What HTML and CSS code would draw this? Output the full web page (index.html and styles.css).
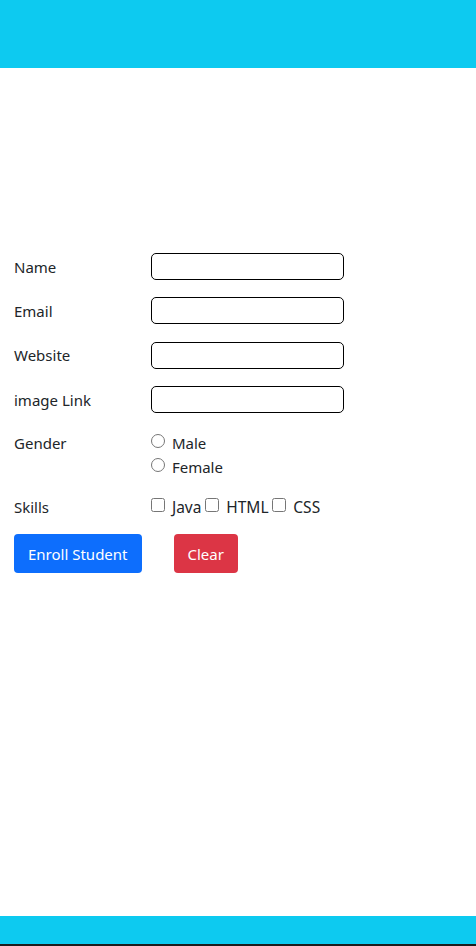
FILE: index.html
```html
<!DOCTYPE html>
<html lang="en">
<head>
<meta charset="utf-8">
<title>Student Enrollment</title>
<link rel="stylesheet" href="styles.css">
</head>
<body>
<div class="page">
  <header class="topbar"></header>
  <main class="content">
    <form class="enroll-form">
      <div class="row field-row">
        <label class="label" for="name">Name</label>
        <input class="text-input" id="name" type="text">
      </div>
      <div class="row field-row">
        <label class="label" for="email">Email</label>
        <input class="text-input" id="email" type="text">
      </div>
      <div class="row field-row">
        <label class="label" for="website">Website</label>
        <input class="text-input" id="website" type="text">
      </div>
      <div class="row field-row">
        <label class="label" for="image">image Link</label>
        <input class="text-input" id="image" type="text">
      </div>
      <div class="row gender-row">
        <span class="label">Gender</span>
        <div class="options">
          <div class="option"><input class="radio" type="radio" name="gender" id="male"> <label for="male">Male</label></div>
          <div class="option"><input class="radio" type="radio" name="gender" id="female"> <label for="female">Female</label></div>
        </div>
      </div>
      <div class="row skills-row">
        <span class="label">Skills</span>
        <div class="options inline"><input class="check" type="checkbox" id="java"> <label for="java">Java</label> <input class="check" type="checkbox" id="html"> <label for="html">HTML</label> <input class="check" type="checkbox" id="css"> <label for="css">CSS</label></div>
      </div>
      <div class="actions">
        <button type="button" class="btn btn-primary">Enroll Student</button>
        <button type="reset" class="btn btn-danger">Clear</button>
      </div>
    </form>
  </main>
  <footer class="footer"></footer>
</div>
</body>
</html>
```
FILE: styles.css
```css
* { box-sizing: border-box; }
html, body { margin: 0; padding: 0; }
body {
  font-family: "Noto Sans", "Open Sans", sans-serif;
  font-size: 15px;
  line-height: 24px;
  color: #212529;
  background: #fff;
}
.page {
  min-height: 100vh;
  display: flex;
  flex-direction: column;
}
.topbar {
  height: 68px;
  background: #0dcaf0;
}
.content {
  flex: 1;
  padding: 185px 0 0 14px;
}
.enroll-form {
  display: flex;
  flex-direction: column;
}
.row {
  display: flex;
}
.field-row {
  align-items: center;
  height: 27px;
  margin-bottom: 17.4px;
}
.label {
  width: 137px;
  flex: none;
}
.text-input {
  width: 193px;
  height: 27px;
  border: 1px solid #000;
  border-radius: 5px;
  padding: 0 6px;
  font: inherit;
  background: #fff;
}
.gender-row {
  margin-top: 0.6px;
  align-items: flex-start;
}
.options {
  display: flex;
  flex-direction: column;
}
.options.inline {
  display: block;
}
.options.inline label {
  font-size: 15.5px;
}
.radio, .check {
  width: 14px;
  height: 14px;
  margin: 0 3px 0 0;
  vertical-align: 1px;
}
.skills-row {
  margin-top: 16px;
}
.actions {
  margin-top: 15px;
  display: flex;
  gap: 32px;
}
.btn {
  font: inherit;
  font-size: 15px;
  color: #fff;
  border: none;
  border-radius: 4px;
  padding: 8px 14px 7px;
  line-height: 24px;
  cursor: pointer;
}
.btn-primary { background: #0d6efd; }
.btn-danger { background: #dc3545; }
.footer {
  height: 30px;
  background: #0dcaf0;
  border-bottom: 2px solid #1c1c1c;
}
```
